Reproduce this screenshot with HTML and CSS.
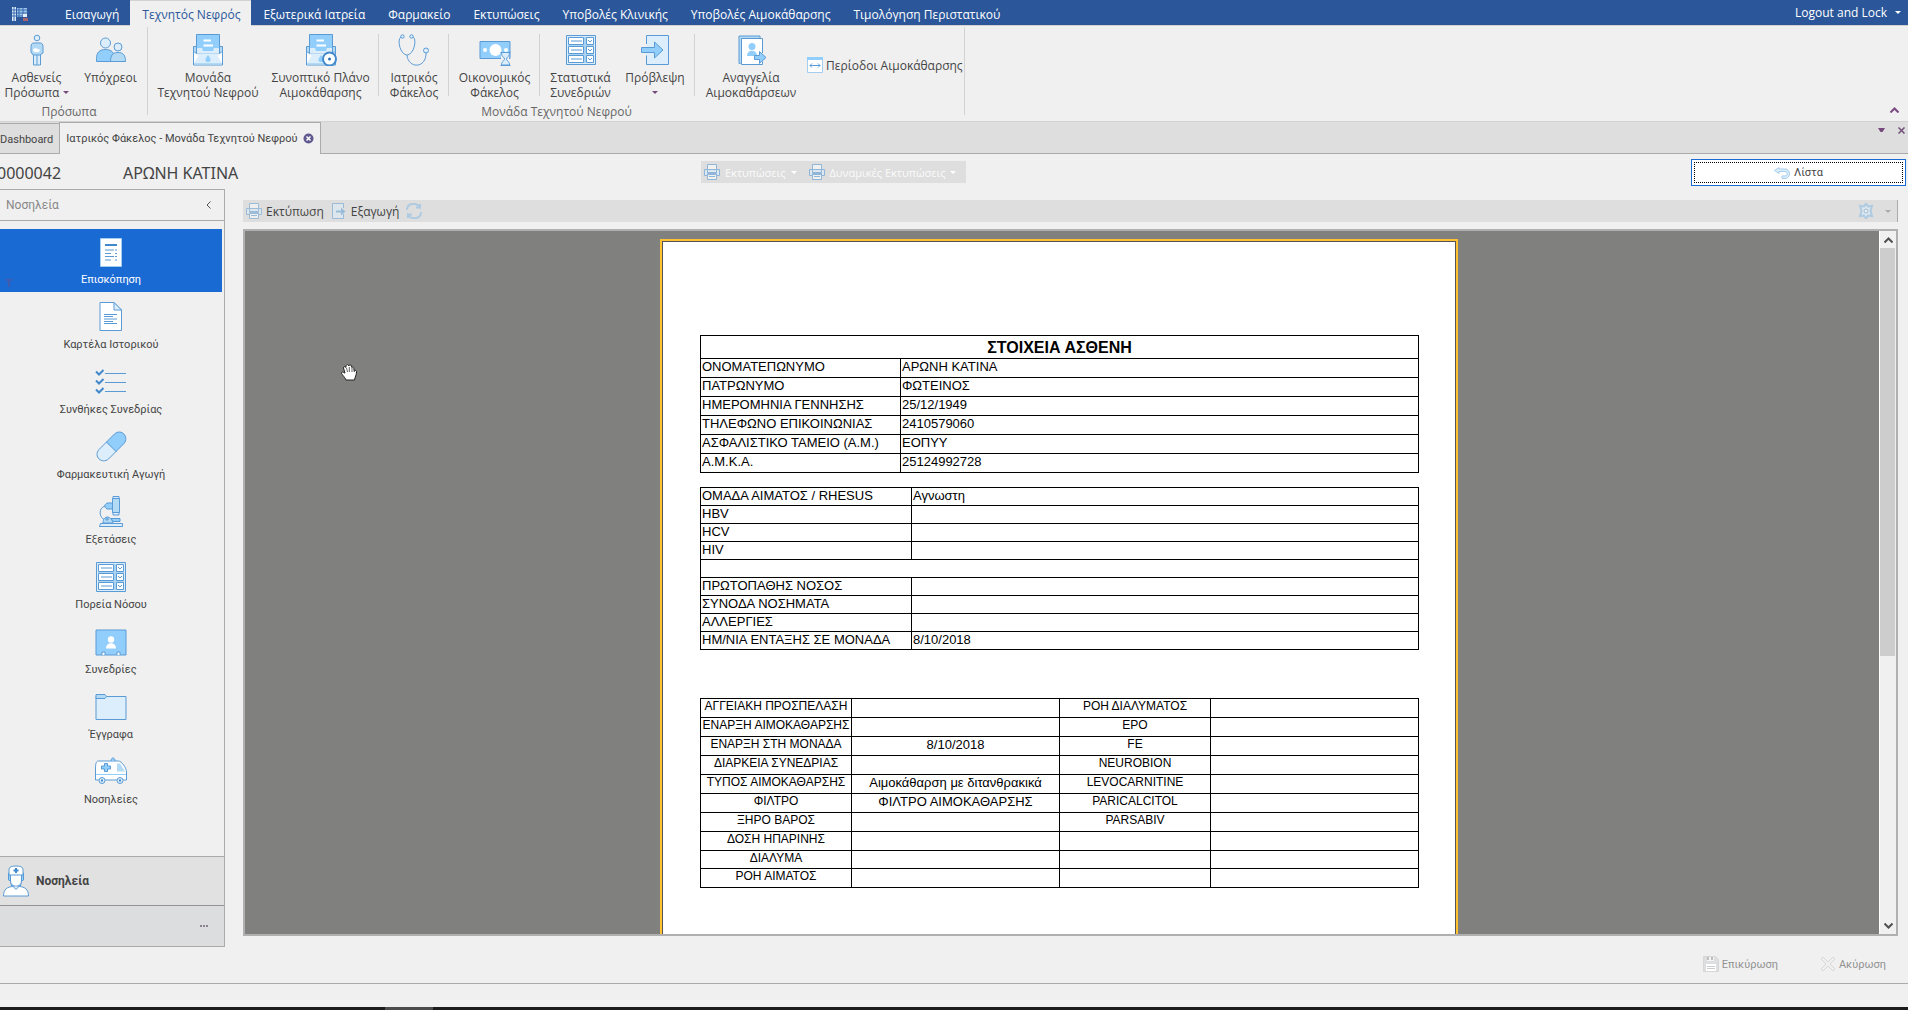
FILE: index.html
```html
<!DOCTYPE html>
<html lang="el">
<head>
<meta charset="utf-8">
<title>Ιατρικός Φάκελος - Μονάδα Τεχνητού Νεφρού</title>
<link rel="stylesheet" href="styles.css">
</head>
<body>
<svg class="sprite" aria-hidden="true">
  <defs>
    <symbol id="i-printer" viewBox="0 0 16 16">
      <path d="M3.500 5v-4.500h9v4.500" class="s w"/>
      <path d="M.5 5.500h15v6h-3v-2h-9v2h-3z" class="s l"/>
      <path d="M3.500 5.500h9v3h-9z" class="s l"/>
      <path d="M3.500 10.500h9v5h-9z" class="s w"/>
      <path d="M5 12.500h6" class="s"/>
    </symbol>
    <symbol id="i-form" viewBox="0 0 32 32">
      <path d="M1.500 1.500h29v29h-29z" class="s l"/>
      <path d="M3 11.500h26M3 20.500h26M20 3v26" class="band"/>
      <path d="M3.500 3.500h15v7h-15zM3.500 12.500h15v7h-15zM3.500 21.500h15v7h-15zM21.500 3.500h7v7h-7zM21.500 12.500h7v7h-7zM21.500 21.500h7v7h-7z" class="s w"/>
      <path d="M6 7h11M6 16h11M6 25h11M23 6l2 2 2-2M23 15l2 2 2-2M23 24l2 2 2-2" class="s"/>
    </symbol>
    <symbol id="i-envelope" viewBox="0 0 32 32">
      <path d="M1.500 13.500h29v17.500h-29z" class="s l"/>
      <path d="M4.500 19v-18.500h23v18.500z" class="s f"/>
      <path d="M5 14h5l1 3h10l1-3h5v5.500h-22z" class="l"/>
      <path d="M1.500 12.500h3v7l-3-2zM30.500 12.500h-3v7l3-2z" class="s m"/>
      <path d="M2 18.500l4.500 3.500-4.500 7z" class="w"/>
      <path d="M30 18.500l-4.500 3.500 4.500 7z" class="w"/>
      <path d="M2 30.500h28v-1.500h-28z" class="m"/>
      <path d="M11.500 6.500h7.500M11.500 11.500h9.500" class="k"/>
      <path d="M16 21c-4 5-3 7 0 7s4-2 0-7z" class="f"/>
    </symbol>
  </defs>
</svg>
<div class="app">
  <header class="titlebar">
    <svg class="app-logo" viewBox="0 0 18 16"><path d="M1 1h4v14H1z" fill="#dce9f8"/><path d="M6 2h10v9H6z" fill="#9cc4ea"/><path d="M1 4h15M1 7h15M1 10h15M3 1v14M8 2v9M12 2v9" stroke="#3b6cb0" fill="none"/><path d="M12 8h4v3h-4z" fill="#e8eef8"/><path d="M12 12h5v3h-5z" fill="#a8646e"/></svg>
    <nav class="ribbon-tabs">
      <a class="ribbon-tab" href="#">Εισαγωγή</a>
      <a class="ribbon-tab ribbon-tab--active" href="#">Τεχνητός Νεφρός</a>
      <a class="ribbon-tab" href="#">Εξωτερικά Ιατρεία</a>
      <a class="ribbon-tab" href="#">Φαρμακείο</a>
      <a class="ribbon-tab" href="#">Εκτυπώσεις</a>
      <a class="ribbon-tab" href="#">Υποβολές Κλινικής</a>
      <a class="ribbon-tab" href="#">Υποβολές Αιμοκάθαρσης</a>
      <a class="ribbon-tab" href="#">Τιμολόγηση Περιστατικού</a>
    </nav>
    <button class="logout" type="button">Logout and Lock <i class="caret"></i></button>
  </header>

  <div class="ribbon">
    <section class="ribbon-group">
      <div class="ribbon-items ribbon-items--persons">
        <button class="tool" type="button">
          <svg viewBox="0 0 32 32"><circle cx="16" cy="4" r="2.800" class="s l"/><path d="M12.500 21v10h7v-10M16 20v11" class="s l"/><path d="M13 9h6c2 0 3 1 3 4v6l-3 2h-7l-2-3v-5c0-3 1-4 3-4z" class="s m"/><path d="M12 16c2-3 3-1 5-1 3 0 2 3 0 3-2 0-4 1-5-2z" class="w"/></svg>
          <span>Ασθενείς<br>Πρόσωπα <i class="caret caret--dark"></i></span>
        </button>
        <button class="tool" type="button">
          <svg viewBox="0 0 32 32"><circle cx="10.500" cy="9" r="5" class="s l"/><path d="M1.500 27.500v-3c0-6 3-9 9-9s9 3 9 9v3z" class="s f"/><circle cx="23" cy="13" r="4" class="s l"/><path d="M15.500 27.500c0-6 2-9 7.500-9s7.500 3 7.500 9z" class="s m"/></svg>
          <span>Υπόχρεοι</span>
        </button>
      </div>
      <div class="ribbon-caption ribbon-caption--persons">Πρόσωπα</div>
    </section>
    <section class="ribbon-group">
      <div class="ribbon-items ribbon-items--unit">
        <button class="tool" type="button"><svg><use href="#i-envelope"/></svg><span>Μονάδα<br>Τεχνητού Νεφρού</span></button>
        <button class="tool tool--sep tool--pad" type="button"><svg viewBox="0 0 32 32"><use href="#i-envelope" width="32" height="32"/><circle cx="24.500" cy="25" r="6.500" class="s2 w"/><circle cx="24.500" cy="25" r="1.500" fill="#2b6fb8"/></svg><span>Συνοπτικό Πλάνο<br>Αιμοκάθαρσης</span></button>
        <button class="tool tool--sep" type="button"><svg viewBox="0 0 32 32"><path d="M4 2.500c-6 1-2 18.500 5 18.500s11-17.500 5-18.500" class="s"/><path d="M9 21c1 14 20 14 19-3" class="s"/><circle cx="4.500" cy="2.500" r="1.700" class="s l"/><circle cx="13.500" cy="2.500" r="1.700" class="s l"/><circle cx="28" cy="16.500" r="2.500" class="s l"/></svg><span>Ιατρικός<br>Φάκελος</span></button>
        <button class="tool tool--sep" type="button"><svg viewBox="0 0 32 32"><path d="M1 7.500h30v17h-30z" class="s f"/><circle cx="16.500" cy="16" r="6" class="w"/><circle cx="6" cy="16" r="2" class="w"/><circle cx="27" cy="16" r="2" class="w"/><path d="M22 19h8v13h-8z" fill="#f0f0f0"/><path d="M21.500 18.500h10M21.500 31.500h10M22.500 19c0 4 3 4 3 6s-3 2-3 6h8c0-4-3-4-3-6s3-2 3-6" class="s l"/></svg><span>Οικονομικός<br>Φάκελος</span></button>
        <button class="tool" type="button"><svg><use href="#i-form"/></svg><span>Στατιστικά<br>Συνεδριών</span></button>
        <button class="tool tool--sep tool--pad" type="button"><svg viewBox="0 0 32 32"><path d="M7.500 10v-8.500h22v29h-22v-9" class="s l"/><path d="M2.500 13.500h13v-5.500l8.500 8-8.500 8v-5.500h-13z" class="s f"/></svg><span>Πρόβλεψη<br><i class="caret caret--dark"></i></span></button>
        <button class="tool" type="button"><svg viewBox="0 0 32 32"><path d="M5.500 29.500h-1.500v-27.500h21v2" class="s m"/><path d="M27.500 19v-14.500h-21v26h21v-3" class="s w"/><circle cx="17" cy="12.500" r="3.500" class="f"/><path d="M12 22c0-7 10-7 10 0z" class="f"/><path d="M19.500 21.500h5v-4l6.500 6-6.500 6v-4h-5z" class="s f"/></svg><span>Αναγγελία<br>Αιμοκαθάρσεων</span></button>
        <button class="tool-inline" type="button"><svg viewBox="0 0 16 16"><path d="M.5.5h15v15h-15z" class="p w"/><path d="M0 0h16v3h-16z" class="f"/><path d="M3 8.500h10M5 6.500l-2 2 2 2M11 6.500l2 2-2 2" class="s"/></svg>Περίοδοι Αιμοκάθαρσης</button>
      </div>
      <div class="ribbon-caption">Μονάδα Τεχνητού Νεφρού</div>
    </section>
    <button class="ribbon-collapse" type="button" aria-label="Σύμπτυξη"><svg viewBox="0 0 9 6"><path d="M.5 5.500l4-4 4 4" fill="none" stroke="#7a4a80" stroke-width="2"/></svg></button>
  </div>

  <div class="doc-tabs">
    <a class="doc-tab" href="#">Dashboard</a>
    <a class="doc-tab doc-tab--active" href="#">Ιατρικός Φάκελος - Μονάδα Τεχνητού Νεφρού <svg viewBox="0 0 11 11"><circle cx="5.500" cy="5.500" r="5" fill="#5f588f"/><path d="M3.500 3.500l4 4M7.500 3.500l-4 4" stroke="#fff" stroke-width="1.500"/></svg></a>
    <div class="doc-controls">
      <svg viewBox="0 0 7 7"><path d="M0 1h7l-2.500 4h-2z" fill="#76497c"/></svg>
      <svg viewBox="0 0 7 7"><path d="M.5.5l6 6M6.500.5l-6 6" stroke="#6f5076" stroke-width="1.500"/></svg>
    </div>
  </div>

  <div class="patient-bar">
    <h1 class="patient"><span class="patient-code">0000042</span><span>ΑΡΩΝΗ ΚΑΤΙΝΑ</span></h1>
    <div class="print-menu">
      <button type="button" disabled><svg><use href="#i-printer"/></svg>Εκτυπώσεις<i class="caret"></i></button>
      <button type="button" disabled><svg><use href="#i-printer"/></svg>Δυναμικές Εκτυπώσεις<i class="caret"></i></button>
    </div>
    <button class="list-button" type="button"><svg viewBox="0 0 16 12"><path d="M5 .5l-4.500 3 4.500 3v-2h6c3 0 3 4.500 0 4.500h-3v2.500h3c6 0 6-9.500 0-9.500h-6z" class="p l"/></svg>Λίστα</button>
  </div>

  <div class="workspace">
    <aside class="sidebar">
      <div class="side-head">Νοσηλεία <svg viewBox="0 0 5 8"><path d="M4.500.5l-3.500 3.500 3.500 3.500" fill="none" stroke="#555"/></svg></div>
      <nav class="side-nav">
        <a class="side-item side-item--active" href="#">
          <svg class="funnel" viewBox="0 0 8 8"><path d="M0 0h8l-3 3v5h-2v-5z" fill="#3f5cae"/></svg>
          <svg viewBox="0 0 32 32"><path d="M5.500 2.500h21v28h-21z" class="p w"/><path d="M10 9h12" class="s2"/><path d="M10 14h9M20 14h2M10 17.500h6M20 17.500h2M10 20.500h9M20 20.500h2M10 24h6M20 24h2" class="s"/></svg>Επισκόπηση</a>
        <a class="side-item" href="#"><svg viewBox="0 0 32 32"><path d="M5 1.500h14l7.500 7.500v20.500h-21.500z" class="s w"/><path d="M19 1.500v7.500h7.500z" class="s l"/><path d="M9 13.500h13M9 15.500h9M9 18h13M9 20.500h9M9 22.500h13" class="s"/></svg>Καρτέλα Ιστορικού</a>
        <a class="side-item" href="#"><svg viewBox="0 0 32 32"><path d="M1 5.500l3 3 4.500-4.500M1 14.500l3 3 4.500-4.500M1 23.500l3 3 4.500-4.500" class="s2"/><path d="M10 7.500h21M10 16.500h21M10 25.500h21" class="s"/></svg>Συνθήκες Συνεδρίας</a>
        <a class="side-item" href="#"><svg viewBox="0 0 32 32"><path d="M11.500 11l-7.500 7.500c-6 7 3 15 9.500 9.500l8-8z" class="s l"/><path d="M11.500 11l8-8c7-6 15 3 9.500 9.500l-8 8z" class="s f"/></svg>Φαρμακευτική Αγωγή</a>
        <a class="side-item" href="#"><svg viewBox="0 0 32 32"><path d="M18 .5h6v3h-6zM18 16h6v3h-6z" class="s l"/><path d="M17.500 2.500h7v14h-7z" class="s m"/><path d="M12 7h5.500v6h-5.500c-3-2-3-4 0-6z" class="s f"/><path d="M10 10c-7 2-6 12 0 14" class="s"/><path d="M8 27c0-8 8-8 10 0z" class="s m"/><path d="M16 22.500h9v3h-7z" class="s f"/><path d="M5.500 27.500h22v3h-23z" class="s l"/><path d="M12 21v4M10 23h4" class="s"/></svg>Εξετάσεις</a>
        <a class="side-item" href="#"><svg><use href="#i-form"/></svg>Πορεία Νόσου</a>
        <a class="side-item" href="#"><svg viewBox="0 0 32 32"><path d="M1 4h30v25h-30z" class="s f"/><circle cx="16" cy="13.500" r="3.200" class="w"/><path d="M11 22.500c0-7 10-7 10 0z" class="w"/><path d="M7 29v-3h3v3M22 29v-3h3v3" class="s w"/></svg>Συνεδρίες</a>
        <a class="side-item" href="#"><svg viewBox="0 0 32 32"><path d="M1 5.500h30v23h-30z" class="s l"/><path d="M1 3.500h9l1.500 2-1.500 2h-9z" class="s m"/></svg>Έγγραφα</a>
        <a class="side-item" href="#"><svg viewBox="0 0 32 32"><path d="M.5 24v-12c0-5 1-7 3-7h20c3 0 8 7 8 11v8z" class="s w"/><path d="M22 7.500h3l5 8h-8z" class="m"/><path d="M16 5c0-4 4-4 4 0" class="s f"/><path d="M9.500 7.500h3v2.500h3v3h-3v2.500h-3v-2.500h-3v-3h3z" class="s f"/><path d="M1 18.500h30" class="band2"/><circle cx="7" cy="24.500" r="3" class="s l"/><circle cx="25" cy="24.500" r="3" class="s l"/><path d="M6 24.500h2M24 24.500h2" class="s2"/></svg>Νοσηλείες</a>
      </nav>
      <button class="side-group" type="button"><svg viewBox="0 0 32 32"><path d="M3.500 31c0-7 4-9 9-9.500h7c5 .5 9 2.500 9 9.500z" class="s w"/><path d="M8.500 8h15v7l-2 1-1 5h-9l-1-5-2-1z" class="s f"/><path d="M10.500 9h11v7c0 7-11 7-11 0z" class="s w"/><path d="M9 10v-6c0-4 14-4 14 0v6z" class="s w"/><path d="M13 21.500l3 3 3-3" class="s l"/><path d="M16 3v5M13.500 5.500h5" class="s2"/></svg>Νοσηλεία</button>
      <button class="side-more" type="button" aria-label="Περισσότερα"><i></i><i></i><i></i></button>
    </aside>

    <main class="content">
      <div class="report-tools">
        <button type="button"><svg class="dim"><use href="#i-printer"/></svg>Εκτύπωση</button>
        <button type="button"><svg class="dim" viewBox="0 0 16 16"><path d="M12.500 5v-4.500h-11v15h11v-4.500" class="s l"/><path d="M5 7.500h5v-3l4.500 4-4.500 4v-3h-5z" fill="#5b9bd5"/></svg>Εξαγωγή</button>
        <button type="button" aria-label="Ανανέωση"><svg class="dim" viewBox="0 0 16 16"><path d="M1 7c0-7 9-8 13-3v-3M14 4.500h-4M15 9c0 7-9 8-13 3v3M2 11.500h4" class="s3"/></svg></button>
        <button class="gear" type="button" aria-label="Ρυθμίσεις"><svg class="dim" viewBox="0 0 16 16"><path d="M8 .5l2 3 4-.5-1.500 5 1.500 5-4-.5-2 3-2-3-4 .5 1.500-5-1.500-5 4 .5z" class="s3 l"/><circle cx="8" cy="8" r="2" class="s w"/></svg><i class="caret"></i></button>
      </div>
      <div class="viewer">
        <div class="canvas">
          <svg class="hand" viewBox="0 0 17 17"><path d="M5 16c-1-3-5-6-4.500-7.500 1-1.500 3 1 3.500.5l-1.500-5c0-1.800 1.800-1.800 2.300-.5l.4-2c.8-1.500 2.300-1 2.500.5.500-1.500 2.500-1.500 2.800 0l.3 1.500c1-1 2 0 2 1l.5 3c.2-1.500 2.200-1.500 2.200.5 0 3-1.500 5-2 8z" fill="#fff" stroke="#222"/><path d="M5.500 4l1 4M8.300 3v5M11 4v4" stroke="#222" stroke-width=".7"/></svg>
          <article class="page">
            <table class="report">
              <colgroup><col class="c-200"><col></colgroup>
              <tr class="title-row"><th colspan="2">ΣΤΟΙΧΕΙΑ ΑΣΘΕΝΗ</th></tr>
              <tr><td>ΟΝΟΜΑΤΕΠΩΝΥΜΟ</td><td>ΑΡΩΝΗ ΚΑΤΙΝΑ</td></tr>
              <tr><td>ΠΑΤΡΩΝΥΜΟ</td><td>ΦΩΤΕΙΝΟΣ</td></tr>
              <tr><td>ΗΜΕΡΟΜΗΝΙΑ ΓΕΝΝΗΣΗΣ</td><td>25/12/1949</td></tr>
              <tr><td>ΤΗΛΕΦΩΝΟ ΕΠΙΚΟΙΝΩΝΙΑΣ</td><td>2410579060</td></tr>
              <tr><td>ΑΣΦΑΛΙΣΤΙΚΟ ΤΑΜΕΙΟ (Α.Μ.)</td><td>ΕΟΠΥΥ</td></tr>
              <tr><td>Α.Μ.Κ.Α.</td><td>25124992728</td></tr>
            </table>
            <table class="report report--compact">
              <colgroup><col class="c-211"><col></colgroup>
              <tr><td>ΟΜΑΔΑ ΑΙΜΑΤΟΣ / RHESUS</td><td>Αγνωστη</td></tr>
              <tr><td>HBV</td><td></td></tr>
              <tr><td>HCV</td><td></td></tr>
              <tr><td>HIV</td><td></td></tr>
              <tr><td colspan="2"></td></tr>
              <tr><td>ΠΡΩΤΟΠΑΘΗΣ ΝΟΣΟΣ</td><td></td></tr>
              <tr><td>ΣΥΝΟΔΑ ΝΟΣΗΜΑΤΑ</td><td></td></tr>
              <tr><td>ΑΛΛΕΡΓΙΕΣ</td><td></td></tr>
              <tr><td>ΗΜ/ΝΙΑ ΕΝΤΑΞΗΣ ΣΕ ΜΟΝΑΔΑ</td><td>8/10/2018</td></tr>
            </table>
            <table class="report report--centered">
              <colgroup><col class="c-151"><col><col class="c-151"><col></colgroup>
              <tr><th>ΑΓΓΕΙΑΚΗ ΠΡΟΣΠΕΛΑΣΗ</th><td></td><th>ΡΟΗ ΔΙΑΛΥΜΑΤΟΣ</th><td></td></tr>
              <tr><th>ΕΝΑΡΞΗ ΑΙΜΟΚΑΘΑΡΣΗΣ</th><td></td><th>EPO</th><td></td></tr>
              <tr><th>ΕΝΑΡΞΗ ΣΤΗ ΜΟΝΑΔΑ</th><td>8/10/2018</td><th>FE</th><td></td></tr>
              <tr><th>ΔΙΑΡΚΕΙΑ ΣΥΝΕΔΡΙΑΣ</th><td></td><th>NEUROBION</th><td></td></tr>
              <tr><th>ΤΥΠΟΣ ΑΙΜΟΚΑΘΑΡΣΗΣ</th><td>Αιμοκάθαρση με διτανθρακικά</td><th>LEVOCARNITINE</th><td></td></tr>
              <tr><th>ΦΙΛΤΡΟ</th><td>ΦΙΛΤΡΟ ΑΙΜΟΚΑΘΑΡΣΗΣ</td><th>PARICALCITOL</th><td></td></tr>
              <tr><th>ΞΗΡΟ ΒΑΡΟΣ</th><td></td><th>PARSABIV</th><td></td></tr>
              <tr><th>ΔΟΣΗ ΗΠΑΡΙΝΗΣ</th><td></td><th></th><td></td></tr>
              <tr class="short-row"><th>ΔΙΑΛΥΜΑ</th><td></td><th></th><td></td></tr>
              <tr><th>ΡΟΗ ΑΙΜΑΤΟΣ</th><td></td><th></th><td></td></tr>
            </table>
          </article>
        </div>
        <div class="scrollbar">
          <button type="button" aria-label="Πάνω"><svg viewBox="0 0 9 6"><path d="M.5 5.500l4-4 4 4" fill="none" stroke="#505050" stroke-width="2"/></svg></button>
          <div class="track"><div class="thumb"></div></div>
          <button type="button" aria-label="Κάτω"><svg viewBox="0 0 9 6"><path d="M.5.5l4 4 4-4" fill="none" stroke="#505050" stroke-width="2"/></svg></button>
        </div>
      </div>
      <div class="actions">
        <button type="button" disabled><svg viewBox="0 0 16 16"><path d="M.5.5h12l3 3v12h-15z" fill="#dcdee0" stroke="#d4d6d8"/><path d="M4 1h7v4h-7z" fill="#f4f4f4"/><path d="M5 1v3M9 1v3" stroke="#888"/><path d="M3 8h10v7h-10z" fill="#fff"/><path d="M4 10.500h8M4 12.500h8" stroke="#ccc"/></svg>Επικύρωση</button>
        <button type="button" disabled><svg viewBox="0 0 16 16"><path d="M3 1l5 5 5-5 2 2-5 5 5 5-2 2-5-5-5 5-2-2 5-5-5-5z" fill="#f0f0f0" stroke="#d6d6d6"/></svg>Ακύρωση</button>
      </div>
    </main>
  </div>
  <footer class="statusbar"></footer>
</div>
</body>
</html>
```
FILE: styles.css
```css
* { box-sizing: border-box; }

body {
  margin: 0;
  background: #f0f0f0;
  color: #444;
  font-family: Roboto, "Noto Sans", sans-serif;
  font-size: 11px;
}

button {
  margin: 0;
  padding: 0;
  border: 0;
  background: none;
  color: inherit;
  font: inherit;
}

a { color: inherit; text-decoration: none; }
svg { display: block; flex: none; }
.sprite { position: absolute; width: 0; height: 0; }

/* icon palette */
.s { fill: none; stroke: #5b9bd5; stroke-width: 1; }
.s2 { fill: none; stroke: #4189cc; stroke-width: 2; }
.s3 { fill: none; stroke: #7fb9e6; stroke-width: 2; }
.p { fill: none; stroke: #a5cdee; stroke-width: 1; }
.k { fill: none; stroke: #fff; stroke-width: 2; }
.band { fill: none; stroke: #a9d3f3; stroke-width: 2; }
.band2 { fill: none; stroke: #92cefc; stroke-width: 1; }
.f { fill: #92cefc; }
.m { fill: #b3daf5; }
.l { fill: #dceefb; }
.w { fill: #fff; }

.caret {
  display: inline-block;
  width: 0;
  border: 3px solid transparent;
  border-top-color: #fff;
  border-bottom: 0;
}
.caret--dark { border-top-color: #76497c; }

.app {
  display: flex;
  flex-direction: column;
  height: 100vh;
  overflow: hidden;
}

/* title bar */
.titlebar {
  display: flex;
  flex: none;
  height: 26px;
  background: #2b579a;
  border-bottom: 1px solid #d2d2d2;
  color: #fff;
  font-family: "Open Sans", sans-serif;
  font-size: 12px;
}
.app-logo { width: 18px; height: 16px; margin: 6px 24px 0 11px; }
.ribbon-tabs { display: flex; flex: 1; }
.ribbon-tab { padding: 6px 11px 0 12px; line-height: 18px; white-space: nowrap; }
.ribbon-tab--active {
  height: 26px;
  padding-top: 5px;
  background: #f0f0f0;
  border-top: 1px solid #d2d2d2;
  color: #2b579a;
}
.logout { display: flex; align-items: center; gap: 8px; padding: 0 7px 0 0; }

/* ribbon */
.ribbon {
  display: flex;
  flex: none;
  height: 96px;
  border-bottom: 1px solid #d2d2d2;
  font-family: "Open Sans", sans-serif;
  font-size: 12px;
}
.ribbon-group {
  display: flex;
  flex-direction: column;
  padding-top: 8px;
  background: linear-gradient(#d2d2d2, #d2d2d2) no-repeat right 1px / 1px 88px;
}
.ribbon-items { display: grid; height: 69px; }
.ribbon-items--persons { grid-template-columns: 73px 75px; }
.ribbon-items--unit { grid-template-columns: 120px 111px 70px 91px 81px 74px 112px 158px; }
.tool {
  display: flex;
  flex-direction: column;
  align-items: center;
  gap: 4px;
  line-height: 15px;
  white-space: nowrap;
}
.tool svg { width: 32px; height: 32px; }
.tool .caret { vertical-align: 3px; }
.tool--sep { background: linear-gradient(#d2d2d2, #d2d2d2) no-repeat right top / 1px 62px; }
.tool--pad { padding-right: 6px; }
.tool-inline {
  display: flex;
  align-items: center;
  gap: 3px;
  height: 62px;
  white-space: nowrap;
}
.tool-inline svg { width: 16px; height: 16px; }
.ribbon-caption { color: #666; line-height: 18px; text-align: center; }
.ribbon-caption--persons { padding-right: 10px; }
.ribbon-collapse { align-self: flex-end; margin: 0 9px 8px auto; }
.ribbon-collapse svg { width: 9px; height: 6px; }

/* document tabs */
.doc-tabs {
  display: flex;
  flex: none;
  align-items: flex-end;
  height: 32px;
  background: #dedede;
  border-bottom: 1px solid #ababab;
}
.doc-tab {
  min-width: 59px;
  height: 30px;
  padding: 0 6px 0 0;
  border-top: 1px solid #ababab;
  line-height: 32px;
  white-space: nowrap;
}
.doc-tab--active {
  display: flex;
  align-items: center;
  gap: 5px;
  height: 32px;
  margin-bottom: -1px;
  padding: 0 6px;
  background: #f0f0f0;
  border: 1px solid #ababab;
  border-bottom: 0;
}
.doc-tab svg { width: 11px; height: 11px; }
.doc-controls { display: flex; align-self: flex-start; align-items: center; gap: 13px; margin: 5px 3px 0 auto; }
.doc-controls svg { width: 7px; height: 7px; }

/* patient header */
.patient-bar { display: flex; flex: none; height: 35px; padding: 5px 2px 0 0; }
.patient {
  display: flex;
  flex: none;
  width: 701px;
  margin: 0;
  font-family: "Noto Sans", sans-serif;
  font-size: 16px;
  font-weight: 400;
  line-height: 28px;
}
.patient-code { width: 126px; margin-left: -3px; }
.print-menu {
  display: flex;
  align-items: center;
  gap: 12px;
  width: 265px;
  height: 22px;
  margin-top: 2px;
  padding-left: 3px;
  background: #dedede;
  color: #fafafa;
  font-family: "Open Sans", sans-serif;
  font-size: 11px;
  white-space: nowrap;
}
.print-menu button { display: flex; align-items: center; gap: 5px; }
.print-menu svg { width: 16px; height: 16px; opacity: .6; }
.list-button {
  display: flex;
  align-items: center;
  justify-content: center;
  gap: 4px;
  width: 215px;
  height: 27px;
  margin-left: auto;
  background: #fff;
  border: 1px solid #1a6ad4;
  outline: 1px dotted #000;
  outline-offset: -4px;
}
.list-button svg { width: 16px; height: 12px; }

/* workspace */
.workspace { display: flex; flex: 1; min-height: 0; }
.sidebar {
  display: flex;
  flex: none;
  flex-direction: column;
  width: 225px;
  margin-bottom: 36px;
  border: 1px solid #ababab;
  border-left: 0;
}
.side-head {
  display: flex;
  flex: none;
  align-items: center;
  justify-content: space-between;
  height: 31px;
  padding: 0 13px 0 6px;
  border-bottom: 1px solid #ababab;
  color: #888;
  font-size: 12px;
}
.side-head svg { width: 5px; height: 8px; }
.side-nav {
  display: flex;
  flex: 1;
  flex-direction: column;
  gap: 2px;
  min-height: 0;
  padding: 8px 2px 0 0;
  overflow: hidden;
}
.side-item {
  display: flex;
  flex: none;
  flex-direction: column;
  align-items: center;
  gap: 4px;
  position: relative;
  height: 63px;
  padding-top: 7px;
  line-height: 16px;
}
.side-item svg { width: 32px; height: 32px; }
.side-item--active { background: #1a6ad4; color: #fff; }
.side-item .funnel { position: absolute; left: 5px; top: 50px; width: 8px; height: 8px; }
.side-group {
  display: flex;
  flex: none;
  align-items: center;
  gap: 4px;
  height: 49px;
  background: #e1e1e1;
  border-top: 1px solid #ababab;
  font-size: 12px;
  font-weight: 700;
}
.side-group svg { width: 32px; height: 32px; }
.side-more {
  display: flex;
  flex: none;
  align-items: center;
  justify-content: flex-end;
  gap: 1px;
  height: 41px;
  padding-right: 16px;
  background: #dcdddf;
  border-top: 1px solid #968f96;
}
.side-more i { width: 2px; height: 2px; background: #8a8290; }

.content {
  display: flex;
  flex: 1;
  flex-direction: column;
  min-width: 0;
  padding: 11px 10px 0 18px;
}
.report-tools {
  display: flex;
  flex: none;
  align-items: center;
  gap: 7px;
  height: 22px;
  padding: 0 6px 0 3px;
  background: #dedede;
  border-right: 1px solid #ababab;
  font-family: "Open Sans", sans-serif;
  font-size: 12px;
}
.report-tools button { display: flex; align-items: center; gap: 4px; }
.report-tools svg { width: 16px; height: 16px; }
.dim { opacity: .5; }
.report-tools .gear { gap: 11px; margin-left: auto; }
.gear .caret { border-top-color: #aaa; }

.viewer {
  display: flex;
  flex: 1;
  min-height: 0;
  margin-top: 7px;
  background: #80807e;
  border: 2px solid #b0b0b0;
}
.canvas {
  position: relative;
  display: flex;
  flex: 1;
  justify-content: center;
  padding: 8px 6px 0 0;
  overflow: hidden;
}
.hand { position: absolute; left: 96px; top: 133px; width: 17px; height: 17px; }
.page {
  flex: none;
  width: 798px;
  height: 1123px;
  padding: 94px 37px 94px 38px;
  background: #fff;
  border: 2px solid #ffc132;
  outline: 1px solid #555;
  outline-offset: -3px;
}

/* report tables */
.report {
  width: 719px;
  border-collapse: collapse;
  table-layout: fixed;
  color: #000;
  font-family: "Liberation Sans", Arial, sans-serif;
  font-size: 13px;
  line-height: 15px;
}
.report tr { height: 19px; }
.report .title-row { height: 23px; }
.report .short-row { height: 18px; }
.report td, .report th {
  padding: 0 1px;
  border: 1px solid #000;
  vertical-align: top;
  white-space: nowrap;
}
.report .title-row th { font-size: 16px; vertical-align: middle; }
.c-200 { width: 200px; }
.c-211 { width: 211px; }
.c-151 { width: 151px; }
.report--compact { margin-top: 14px; }
.report--compact tr { height: 18px; }
.report--centered { margin-top: 48px; text-align: center; }
.report--centered th { font-size: 12px; font-weight: 400; }

/* scrollbar */
.scrollbar {
  display: flex;
  flex: none;
  flex-direction: column;
  width: 17px;
  background: #f0f0f0;
  border-left: 1px solid #fff;
}
.scrollbar button { display: flex; align-items: center; justify-content: center; height: 17px; }
.scrollbar svg { width: 9px; height: 6px; }
.track { flex: 1; }
.thumb { height: 61%; margin-right: 1px; background: #cdcdcd; }

.actions {
  display: flex;
  flex: none;
  align-items: center;
  justify-content: flex-end;
  gap: 42px;
  height: 47px;
  padding: 9px 12px 0 0;
  color: #929292;
}
.actions button { display: flex; align-items: center; gap: 3px; }
.actions svg { width: 16px; height: 16px; }

.statusbar {
  flex: none;
  height: 27px;
  border-top: 1px solid #ababab;
  background:
    linear-gradient(#4c4c4e, #4c4c4e) no-repeat 385px bottom / 48px 3px,
    linear-gradient(#1c1c1e, #1c1c1e) no-repeat left bottom / 100% 3px;
}
```
